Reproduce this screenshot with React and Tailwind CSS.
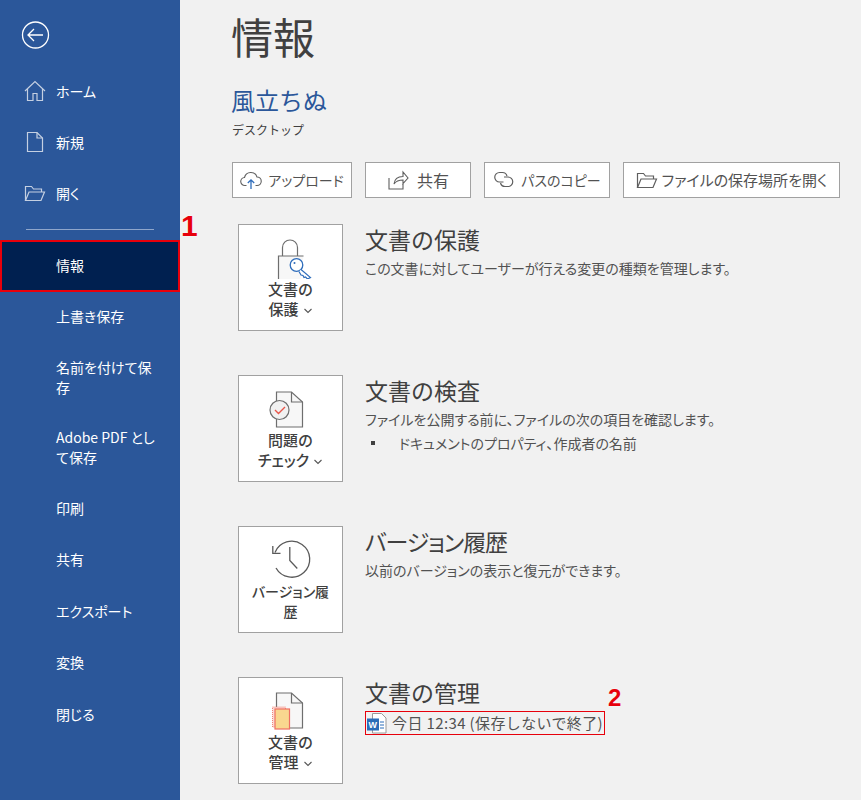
import React from 'react';

const PALT = "[font-feature-settings:'palt']";

const HomeIcon = () => (
  <svg viewBox="0 0 22 22" className="h-5.5 w-5.5" fill="none" stroke="#c5d0e2" strokeWidth="1.2">
    <path d="M1 11 11 1.5 21 11" />
    <path d="M3.5 9v11.5h5.5v-7h4v7h5.5V9" />
  </svg>
);

const NewIcon = () => (
  <svg viewBox="0 0 22 22" className="h-5.5 w-5.5" fill="none" stroke="#c5d0e2" strokeWidth="1.2">
    <path d="M3.5 1.5h9.5l5.500 5.500v13.500h-15z" />
    <path d="M13 1.500v5.500h5.500" />
  </svg>
);

const FolderIcon = ({ color = '#c5d0e2' }) => (
  <svg viewBox="0 0 22 22" className="h-5.5 w-5.5" fill="none" stroke={color} strokeWidth="1.2">
    <path d="M1.500 18.500v-14h6l2 2.500h8v3" />
    <path d="M1.500 18.500h15.500l3.500-8.500h-15.500z" />
  </svg>
);

const navTop = [
  { label: 'ホーム', icon: <HomeIcon /> },
  { label: '新規', icon: <NewIcon /> },
  { label: '開く', icon: <FolderIcon /> },
];

const navBottom = ['印刷', '共有', 'エクスポート', '変換', '閉じる'];

const DocShape = ({ y }) => (
  <g>
    <path d={`M9.500 ${y}h15l11 10v25h-26z`} fill="#f7f7f7" stroke="#6e6e6e" strokeWidth="1.200" />
    <path d={`M24.500 ${y}v10h11`} fill="none" stroke="#6e6e6e" strokeWidth="1.200" />
  </g>
);

const LockIcon = () => (
  <svg viewBox="0 0 48 44" className="h-11 w-12" fill="none">
    <path d="M15.500 21V12.500a7.500 7.500 0 0 1 15 0V21" stroke="#6e6e6e" strokeWidth="1.200" />
    <path d="M36.500 21h-25v24h22" fill="#f7f7f7" stroke="#6e6e6e" strokeWidth="1.200" />
    <circle cx="29.500" cy="30" r="6.300" fill="#fff" stroke="#2f6dbb" strokeWidth="1.300" />
    <path d="M34 34.500l9.500 8-3 1.500-2-2-1.500.5-1-2-2-.500-2-3.500" fill="#fff" stroke="#2f6dbb" strokeWidth="1.200" />
    <circle cx="27.500" cy="28" r="1" fill="#2f6dbb" />
  </svg>
);

const CheckDocIcon = () => (
  <svg viewBox="0 0 48 44" className="h-11 w-12" fill="none">
    <DocShape y={6} />
    <circle cx="12.500" cy="24" r="9.500" fill="#f1f1f1" stroke="#6e6e6e" strokeWidth="1.200" />
    <path d="M8 24l3.500 3.500 6.500-6.500" stroke="#e8564a" strokeWidth="1.400" />
  </svg>
);

const ClockIcon = () => (
  <svg viewBox="0 0 48 44" className="h-11 w-12" fill="none" stroke="#5a5a5a" strokeWidth="1.300">
    <path d="M8 15.500A18 18 0 1 1 9 31" />
    <path d="M5.800 9v7.300h7.700" />
    <path d="M22.800 10v13.500l7.500 8" />
  </svg>
);

const ManageIcon = () => (
  <svg viewBox="0 0 48 44" className="h-11 w-12" fill="none">
    <DocShape y={5} />
    <rect x="5.500" y="19" width="13" height="20" fill="#fbd9d3" stroke="#f0857a" strokeWidth="1" strokeDasharray="1 1" />
    <rect x="8" y="21" width="14.500" height="20" fill="#f9d78f" stroke="#ee6f63" strokeWidth="1.200" />
  </svg>
);

const Chevron = () => (
  <svg viewBox="0 0 10 6" className="ml-1 inline-block h-1.5 w-2.5 align-middle" fill="none" stroke="#555" strokeWidth="1.100">
    <path d="M1.500 1 5 4.500 8.500 1" />
  </svg>
);

const UploadIcon = () => (
  <svg viewBox="0 0 22 22" className="h-5.5 w-5.5" fill="none" stroke="#5f5f5f" strokeWidth="1.100">
    <path d="M6.500 16.500H5a4 4 0 0 1-.5-8 6.500 6.500 0 0 1 12.500-.500 4.200 4.200 0 0 1 0 8.500h-1.500" />
    <path d="M11 20v-9M7.800 14 11 10.800l3.200 3.200" stroke="#2f6dbb" strokeWidth="1.300" />
  </svg>
);

const ShareIcon = () => (
  <svg viewBox="0 0 22 22" className="h-5.5 w-5.5" fill="none" stroke="#5f5f5f" strokeWidth="1.100">
    <path d="M2 9v11h14v-5" />
    <path d="M7 15c.5-5 4-7.500 9-7.500V3l5 6-5 5.500V11c-4 0-7 1-9 4z" />
  </svg>
);

const LinkIcon = () => (
  <svg viewBox="0 0 22 22" className="h-5.5 w-5.5" fill="none" stroke="#5f5f5f" strokeWidth="1.200">
    <path d="M10.500 13H6.500a4.750 4.750 0 0 1 0-9.500h3a4.750 4.750 0 0 1 4.500 3.500" />
    <path d="M11 8h4a4.750 4.750 0 0 1 0 9.500h-3a4.750 4.750 0 0 1-4.500-3.500" />
  </svg>
);

const WordIcon = () => (
  <svg viewBox="0 0 22 22" className="h-5.5 w-5.5">
    <path d="M6.500 1.500h9l4.500 4.500v15h-13.500z" fill="#fff" stroke="#9a9a9a" strokeWidth="1" />
    <path d="M14 10h4M14 13h4M14 16h4" stroke="#2b6cb8" strokeWidth="1" />
    <rect x="1" y="6.500" width="12" height="12" fill="#2b6cb8" />
    <text x="7" y="16" textAnchor="middle" fontSize="9" fontWeight="700" fill="#fff" fontFamily="Liberation Sans, sans-serif">W</text>
  </svg>
);

const Section = ({ icon, label, title, titleClass = '', children }) => (
  <div className="flex gap-5.5">
    <div className="flex h-[107px] w-[105px] shrink-0 flex-col items-center border border-neutral-400 bg-white pt-2.5 text-center text-[15px] leading-5 font-medium text-neutral-700">
      {icon}
      {label}
    </div>
    <div>
      <h2 className={`text-[23px] leading-7.5 text-neutral-700 ${titleClass}`}>{title}</h2>
      <div className="mt-1">{children}</div>
    </div>
  </div>
);

const App = () => {
  return (
    <div className="relative flex h-[800px] w-[861px] overflow-hidden bg-[#f1f1f1] font-['Noto_Sans_CJK_JP','Noto_Sans',sans-serif]">
      {/* Sidebar */}
      <nav className={`flex w-45 shrink-0 flex-col bg-[#2b579a] text-sm text-white ${PALT}`}>
        <div className="pt-5 pb-4 pl-5">
          <svg viewBox="0 0 30 30" className="h-7.5 w-7.5" fill="none" stroke="#fff" strokeWidth="1.300">
            <circle cx="15.500" cy="15" r="13" />
            <path d="M23 15H8.500M14 9l-6 6 6 6" />
          </svg>
        </div>
        {navTop.map((item) => (
          <div key={item.label} className="flex h-12.75 items-center pb-0.5">
            <div className="w-14 shrink-0 pl-6">{item.icon}</div>
            <span>{item.label}</span>
          </div>
        ))}
        <div className="mx-6.5 mt-2.5 mb-2.5 h-px bg-[#8fa6cb]" />
        <div className="flex h-[51.500px] items-center border-2 border-red-600 bg-[#002050] pb-0.5 pl-[54px]">情報</div>
        <div className="flex h-[51.500px] items-center pb-0.5 pl-14">上書き保存</div>
        <div className="flex h-17.5 items-center pr-5 pb-0.5 pl-14 leading-5">名前を付けて保存</div>
        <div className="flex h-17.5 items-center pr-5 pb-0.5 pl-14 leading-5">Adobe PDF として保存</div>
        {navBottom.map((label) => (
          <div key={label} className="flex h-[51.500px] items-center pb-0.5 pl-14">{label}</div>
        ))}
      </nav>

      {/* Main */}
      <main className="flex-1 pt-4 pl-13">
        <h1 className="-ml-px text-[42px] leading-10 text-neutral-700">情報</h1>
        <div className="mt-7 -ml-px text-2xl leading-8 text-[#2b579a]">風立ちぬ</div>
        <div className="mt-1.5 text-xs leading-4 text-neutral-700">デスクトップ</div>

        <div className={`mt-6 flex gap-[13px] text-neutral-600 ${PALT}`}>
          <button className="flex h-9 w-30 items-center justify-center gap-1.5 border border-neutral-400 bg-white text-sm">
            <UploadIcon />
            アップロード
          </button>
          <button className="flex h-9 w-[106px] items-center justify-center gap-2 border border-neutral-400 bg-white text-base">
            <ShareIcon />
            共有
          </button>
          <button className="flex h-9 w-[126px] items-center justify-center gap-1.5 border border-neutral-400 bg-white text-sm">
            <LinkIcon />
            パスのコピー
          </button>
          <button className="flex h-9 w-[217px] items-center justify-center gap-1 border border-neutral-400 bg-white text-[15px]">
            <FolderIcon color="#5f5f5f" />
            ファイルの保存場所を開く
          </button>
        </div>

        <div className="mt-[26px] ml-1.5 flex flex-col gap-11 text-sm leading-5 text-neutral-600">
          <Section
            icon={<LockIcon />}
            title="文書の保護"
            label={<div>文書の<br />保護<Chevron /></div>}
          >
            <p className={PALT}>この文書に対してユーザーが行える変更の種類を管理します。</p>
          </Section>
          <Section
            icon={<CheckDocIcon />}
            title="文書の検査"
            label={<div>問題の<br /><span className={PALT}>チェック</span><Chevron /></div>}
          >
            <p className={PALT}>ファイルを公開する前に、ファイルの次の項目を確認します。</p>
            <div className="mt-1 flex items-center">
              <span className="ml-1.5 h-1 w-1 bg-neutral-700" />
              <span className={`ml-6 ${PALT}`}>ドキュメントのプロパティ、作成者の名前</span>
            </div>
          </Section>
          <Section
            icon={<ClockIcon />}
            title="バージョン履歴"
            titleClass={`tracking-tighter ${PALT}`}
            label={<div className={`px-2.5 text-sm ${PALT}`}>バージョン履歴</div>}
          >
            <p className={PALT}>以前のバージョンの表示と復元ができます。</p>
          </Section>
          <Section
            icon={<ManageIcon />}
            title="文書の管理"
            label={<div>文書の<br />管理<Chevron /></div>}
          >
            <div className="flex h-6 w-60 items-center gap-1 border border-red-600 text-[15px] tracking-wide whitespace-nowrap">
              <WordIcon />
              今日 12:34 (保存しないで終了)
            </div>
          </Section>
        </div>
      </main>

      {/* Annotations */}
      <span className="absolute top-[208px] left-[181px] font-['Liberation_Sans',sans-serif] text-3xl font-bold text-red-600 [text-shadow:0_0_2px_white]">1</span>
      <span className="absolute top-[682px] left-[608px] font-['Liberation_Sans',sans-serif] text-2xl font-bold text-red-600 [text-shadow:0_0_2px_white]">2</span>
    </div>
  );
};

export default App;
